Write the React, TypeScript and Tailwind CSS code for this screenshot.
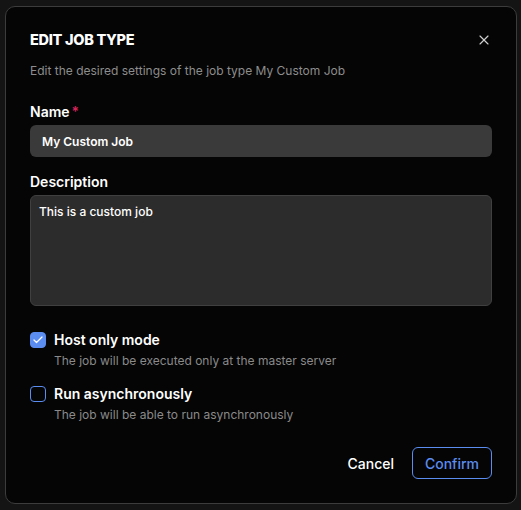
import { useState } from 'react';
import { Check, X } from 'lucide-react';

interface OptionProps {
  checked: boolean;
  label: string;
  hint: string;
  onToggle: () => void;
}

function Option({ checked, label, hint, onToggle }: OptionProps) {
  return (
    <div className="flex gap-2">
      <button
        type="button"
        onClick={onToggle}
        className={`mt-[1px] flex h-4 w-4 shrink-0 items-center justify-center rounded-[4px] border ${
          checked ? 'border-[#5b8cf0] bg-[#5b8cf0]' : 'border-[#5b8cf0] bg-transparent'
        }`}
      >
        {checked && <Check className="h-3 w-3 text-white" strokeWidth={2.5} />}
      </button>
      <div className="flex flex-col">
        <span className="text-[14px] font-semibold leading-[18px] text-white">{label}</span>
        <span className="mt-[4px] text-[12px] leading-[16px] text-[#8a8a8a]">{hint}</span>
      </div>
    </div>
  );
}

export default function App() {
  const [hostOnly, setHostOnly] = useState(true);
  const [async, setAsync] = useState(false);

  return (
    <div
      className="flex h-[510px] w-[521px] items-start bg-[#141414] pl-[5px] pt-[6px]"
      style={{ fontFamily: 'Inter, "Noto Sans", sans-serif' }}
    >
      <div className="flex h-[498px] w-[512px] flex-col rounded-[10px] border border-[#3c3c3c] bg-[#050505] pl-[24px] pr-[24px] pt-[24px]">
        {/* Header */}
        <div className="flex items-center justify-between">
          <h2 className="text-[14.5px] font-extrabold leading-[18px] tracking-[-0.02em] text-white">
            EDIT JOB TYPE
          </h2>
          <button type="button" className="text-[#cfcfcf]">
            <X className="h-4 w-4" strokeWidth={1.75} />
          </button>
        </div>
        <p className="mt-[14px] text-[12px] leading-[16px] text-[#8d8d8d]">
          Edit the desired settings of the job type My Custom Job
        </p>

        {/* Name */}
        <label className="mt-[24px] flex text-[14px] font-semibold leading-[18px] text-white">
          Name<span className="ml-[2px] text-[#d6245a]">*</span>
        </label>
        <input
          type="text"
          defaultValue="My Custom Job"
          className="mt-[4px] h-[32px] w-full rounded-[6px] bg-[#3a3a3a] px-3 text-[12px] font-semibold text-white outline-none"
        />

        {/* Description */}
        <label className="mt-[16px] text-[14px] font-semibold leading-[18px] text-white">
          Description
        </label>
        <textarea
          defaultValue="This is a custom job"
          className="mt-[4px] h-[111px] w-full resize-none rounded-[6px] border border-[#404040] bg-[#2c2c2c] px-2 py-[7px] text-[12px] font-medium text-white outline-none"
        />

        {/* Options */}
        <div className="mt-[25px] flex flex-col gap-[16px]">
          <Option
            checked={hostOnly}
            onToggle={() => setHostOnly(!hostOnly)}
            label="Host only mode"
            hint="The job will be executed only at the master server"
          />
          <Option
            checked={async}
            onToggle={() => setAsync(!async)}
            label="Run asynchronously"
            hint="The job will be able to run asynchronously"
          />
        </div>

        {/* Footer */}
        <div className="mt-[24px] flex items-center justify-end gap-[18px]">
          <button type="button" className="text-[14px] font-medium text-white">
            Cancel
          </button>
          <button
            type="button"
            className="h-[32px] w-[80px] rounded-[6px] border border-[#5b8cf0] text-[14px] font-medium text-[#5b8cf0]"
          >
            Confirm
          </button>
        </div>
      </div>
    </div>
  );
}
